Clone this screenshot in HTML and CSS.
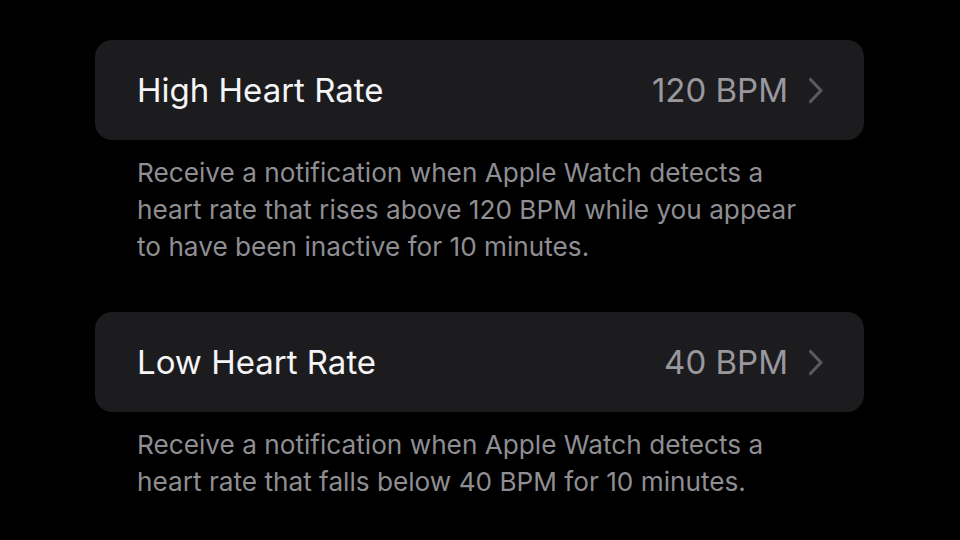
FILE: index.html
```html
<!DOCTYPE html>
<html lang="en">
<head>
  <meta charset="UTF-8">
  <meta name="viewport" content="width=device-width, initial-scale=1.0">
  <title>Heart Notifications</title>
  <link rel="stylesheet" href="styles.css">
</head>
<body>
  <main class="settings">
    <section class="group">
      <div class="row">
        <span class="row-title">High Heart Rate</span>
        <span class="row-value">120 BPM</span>
        <svg class="chevron" viewBox="0 0 16 27" width="16" height="27">
          <path d="M2.5 2.5 L13 13.5 L2.5 24.5" fill="none" stroke="currentColor" stroke-width="3.2" stroke-linecap="round" stroke-linejoin="round"/>
        </svg>
      </div>
      <p class="footer">Receive a notification when Apple Watch detects a heart rate that rises above 120 BPM while you appear to have been inactive for 10 minutes.</p>
    </section>

    <section class="group">
      <div class="row">
        <span class="row-title">Low Heart Rate</span>
        <span class="row-value">40 BPM</span>
        <svg class="chevron" viewBox="0 0 16 27" width="16" height="27">
          <path d="M2.5 2.5 L13 13.5 L2.5 24.5" fill="none" stroke="currentColor" stroke-width="3.2" stroke-linecap="round" stroke-linejoin="round"/>
        </svg>
      </div>
      <p class="footer">Receive a notification when Apple Watch detects a heart rate that falls below 40 BPM for 10 minutes.</p>
    </section>
  </main>
</body>
</html>
```

FILE: styles.css
```css
body {
  margin: 0;
  padding: 0;
  background: #000;
  font-family: Inter, "Noto Sans", sans-serif;
  width: 960px;
  height: 540px;
  overflow: hidden;
}

.settings {
  padding: 40px 96px 0 95px;
  display: flex;
  flex-direction: column;
  gap: 47px;
}

.row {
  height: 100px;
  background: #1c1c1e;
  border-radius: 17px;
  display: flex;
  align-items: center;
  padding: 0 40px 0 42px;
}

.row-title {
  flex: 1;
  color: #f5f5f7;
  font-size: 33px;
}

.row-value {
  color: #98989e;
  font-size: 33px;
  margin-right: 20px;
}

.chevron {
  color: #59595e;
}

.footer {
  margin: 15px 0 0 42px;
  color: #8e8e93;
  font-size: 26.2px;
  line-height: 36.8px;
  max-width: 675px;
}
```
